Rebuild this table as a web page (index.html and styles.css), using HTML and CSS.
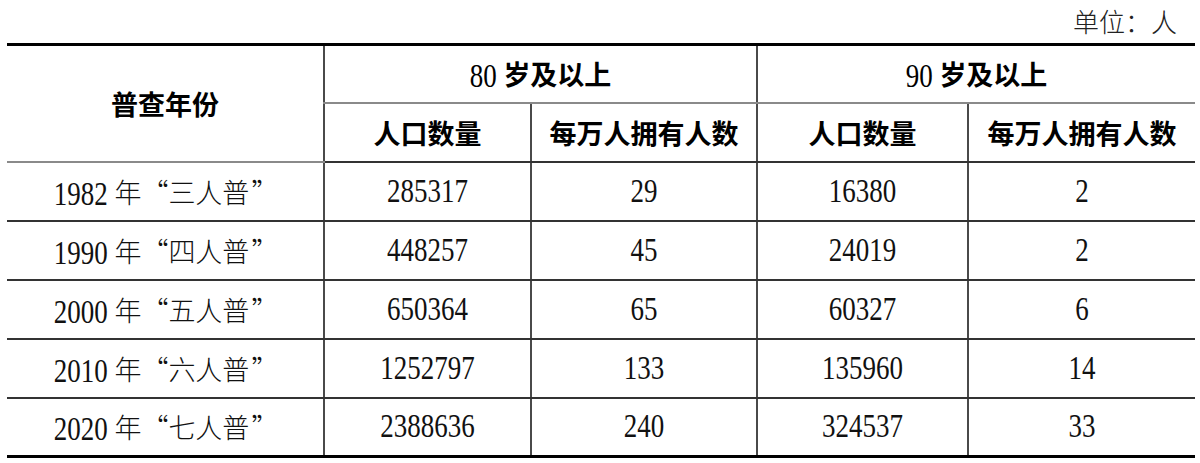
FILE: index.html
```html
<!DOCTYPE html>
<html lang="zh-CN">
<head>
<meta charset="utf-8">
<title>高龄人口</title>
<link rel="stylesheet" href="styles.css">
</head>
<body>
<div class="page">
  <div class="unit">单位：人</div>
  <table class="data">
    <colgroup>
      <col class="c1"><col class="c2"><col class="c3"><col class="c4"><col class="c5">
    </colgroup>
    <thead>
      <tr class="h1">
        <th rowspan="2" class="first">普查年份</th>
        <th colspan="2"><span class="n">80</span> 岁及以上</th>
        <th colspan="2" class="last"><span class="n">90</span> 岁及以上</th>
      </tr>
      <tr class="h2">
        <th>人口数量</th>
        <th>每万人拥有人数</th>
        <th>人口数量</th>
        <th class="last">每万人拥有人数</th>
      </tr>
    </thead>
    <tbody>
      <tr>
        <td class="first"><span class="n yr">1982</span> 年<span class="q ql">“</span>三人普<span class="q qr">”</span></td>
        <td><span class="n">285317</span></td>
        <td><span class="n">29</span></td>
        <td><span class="n">16380</span></td>
        <td class="last"><span class="n">2</span></td>
      </tr>
      <tr>
        <td class="first"><span class="n yr">1990</span> 年<span class="q ql">“</span>四人普<span class="q qr">”</span></td>
        <td><span class="n">448257</span></td>
        <td><span class="n">45</span></td>
        <td><span class="n">24019</span></td>
        <td class="last"><span class="n">2</span></td>
      </tr>
      <tr>
        <td class="first"><span class="n yr">2000</span> 年<span class="q ql">“</span>五人普<span class="q qr">”</span></td>
        <td><span class="n">650364</span></td>
        <td><span class="n">65</span></td>
        <td><span class="n">60327</span></td>
        <td class="last"><span class="n">6</span></td>
      </tr>
      <tr>
        <td class="first"><span class="n yr">2010</span> 年<span class="q ql">“</span>六人普<span class="q qr">”</span></td>
        <td><span class="n">1252797</span></td>
        <td><span class="n">133</span></td>
        <td><span class="n">135960</span></td>
        <td class="last"><span class="n">14</span></td>
      </tr>
      <tr class="end">
        <td class="first"><span class="n yr">2020</span> 年<span class="q ql">“</span>七人普<span class="q qr">”</span></td>
        <td><span class="n">2388636</span></td>
        <td><span class="n">240</span></td>
        <td><span class="n">324537</span></td>
        <td class="last"><span class="n">33</span></td>
      </tr>
    </tbody>
  </table>
</div>
</body>
</html>
```
FILE: styles.css
```css
html, body {
  margin: 0;
  padding: 0;
  background: #ffffff;
}
body {
  font-family: "Liberation Serif", "Noto Sans CJK SC", serif;
  color: #111;
}
.page {
  width: 1188px;
  padding-left: 7px;
  display: flex;
  flex-direction: column;
}
.unit {
  height: 43px;
  line-height: 42px;
  text-align: right;
  padding-right: 18px;
  font-size: 26px;
  font-family: "Noto Sans CJK SC", sans-serif;
  font-weight: 300;
  color: #222;
}
.data {
  width: 1188px;
  table-layout: fixed;
  border-collapse: collapse;
  border-top: 3px solid #000;
  border-bottom: 3px solid #000;
}
.c1 { width: 317px; }
.c2 { width: 207px; }
.c3 { width: 226px; }
.c4 { width: 211px; }
.c5 { width: 227px; }
.data th, .data td {
  text-align: center;
  vertical-align: middle;
  padding: 0;
  border-left: 2px solid #4a4a4a;
  border-bottom: 2px solid #333;
  white-space: nowrap;
}
.data .first { border-left: none; }
.data tr { height: 59px; }
.data tr.h1 { height: 58px; }
.data tr.h1 th { border-bottom-color: #8a8a8a; }
.data tr.end td { border-bottom: none; }
.data th {
  font-family: "Liberation Serif", "Noto Sans CJK SC", serif;
  font-size: 27px;
  font-weight: 700;
  color: #000;
}
.data th .n {
  font-weight: 400;
}
.data td {
  font-size: 27px;
  font-weight: 300;
  color: #111;
}
.n {
  display: inline-block;
  font-family: "Liberation Serif", serif;
  font-size: 27px;
  font-weight: 400;
  transform: scaleY(1.22);
}
.yr {
  margin-right: 0;
}
.q {
  display: inline-block;
  width: 1em;
  font-family: "Noto Sans CJK SC", sans-serif;
  font-weight: 300;
}
.ql { text-align: right; padding-right: 2px; box-sizing: border-box; }
.qr { text-align: left; padding-left: 2px; box-sizing: border-box; }
```
